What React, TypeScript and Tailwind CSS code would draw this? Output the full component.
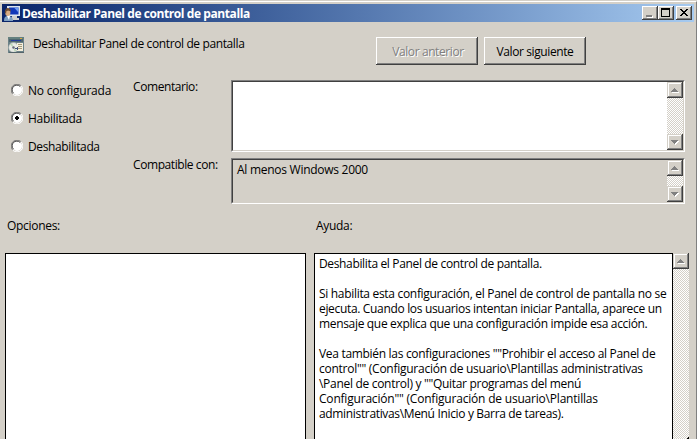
import type { ReactNode } from 'react';

const raised =
  'bg-[#d4d0c8] shadow-[inset_-1px_-1px_#404040,inset_1px_1px_#d4d0c8,inset_-2px_-2px_#808080,inset_2px_2px_#fff]';

function TitleIcon() {
  return (
    <svg width="16" height="16" viewBox="0 0 16 16" className="shrink-0">
      <path d="M3 1h13v10H3z" fill="#dde5ee" />
      <path d="M5 2.500h9.500v7H5z" fill="#1238b8" />
      <path d="M10 2.500h4.500v5z" fill="#6f9cf0" />
      <path d="M8 11h5v2h2v2H7z" fill="#d0d0cc" />
      <path d="M0 16c0-3.500 1-5 4-5s5 1.500 5 5z" fill="#7e9fc2" />
      <path d="M3 11h3l-1 4z" fill="#fff" />
      <ellipse cx="3.800" cy="7.500" rx="2.600" ry="3.600" fill="#d9ad83" />
      <path d="M.8 8c0-3 1-5 3-5s3 1.500 3 3.500L4 5.500 2.200 6.500v2z" fill="#6c4c35" />
    </svg>
  );
}

function PolicyIcon() {
  return (
    <svg width="16" height="16" viewBox="0 0 16 16" className="shrink-0" shapeRendering="crispEdges">
      <rect x="0" y="0" width="16" height="16" fill="#6c8288" />
      <rect x="0" y="0" width="16" height="2" fill="#65807f" />
      <rect x="1" y="2" width="14" height="3" fill="#4e6670" />
      <rect x="12" y="1" width="2" height="1" fill="#d8a944" />
      <rect x="3" y="3" width="10" height="1" fill="#243c9c" />
      <g shapeRendering="auto">
        <circle cx="5.500" cy="10.500" r="4.900" fill="#e7eae5" stroke="#9aa5a5" strokeWidth=".6" />
        <path d="M5.500 10.500 2 7.500l2-1.500zM5.500 10.500l3 3-2 1z" fill="#b9d7b4" />
        <circle cx="5.500" cy="10.500" r="1.200" fill="#667" />
      </g>
      <rect x="9" y="6" width="6" height="8" fill="#f4eedc" />
      <path d="M10 7h4v1h-4zM10 9h4v1h-4zM10 11h4v1h-4z" fill="#a39a7c" />
      <path d="M7 11h3v1H7zM9 10h1v3H9z" fill="#44547c" />
      <path d="M1 15h15v1H1z" fill="#53646a" />
    </svg>
  );
}

const raisedThin =
  'bg-[#d4d0c8] shadow-[inset_-1px_-1px_#404040,inset_1px_1px_#fff,inset_-2px_-2px_#808080]';

function CaptionButton({ children }: { children: ReactNode }) {
  return (
    <button className={`h-[14px] w-4 shrink-0 ${raisedThin}`}>
      <svg width="16" height="14" viewBox="0 0 16 14" shapeRendering="crispEdges">{children}</svg>
    </button>
  );
}

function Arrow({ down = false }: { down?: boolean }) {
  return (
    <div className={`h-4 w-4 shrink-0 ${raised}`}>
      <svg width="16" height="16" viewBox="0 0 16 16" shapeRendering="crispEdges">
        {down ? (
          <>
            <path d="M5 7h7v1h-1v1h-1v1H9v1H8v-1H7V9H6V8H5z" fill="#fff" />
            <path d="M4 6h7v1h-1v1H9v1H8v1H7V9H6V8H5V7H4z" fill="#808080" />
          </>
        ) : (
          <>
            <path d="M5 10h7v1H5z" fill="#fff" />
            <path d="M7 6h1v1h1v1h1v1h1v1H4V9h1V8h1V7h1z" fill="#808080" />
          </>
        )}
      </svg>
    </div>
  );
}

function ScrollBar({ open = false }: { open?: boolean }) {
  return (
    <div className="flex w-4 shrink-0 flex-col bg-[repeating-conic-gradient(#fff_0_25%,#d4d0c8_0_50%)] bg-[length:2px_2px]">
      <Arrow />
      <div className="flex-1" />
      {open ? (
        <svg width="16" height="2" viewBox="0 0 16 2" shapeRendering="crispEdges">
          <path d="M15 0h1v2h-2V1h1z" fill="#000" />
        </svg>
      ) : (
        <Arrow down />
      )}
    </div>
  );
}

function Radio({ label, checked = false, spacing }: { label: string; checked?: boolean; spacing: string }) {
  return (
    <label className="flex h-7 items-center gap-[5px]">
      <svg width="12" height="12" viewBox="0 0 12 12">
        <circle cx="6" cy="6" r="5" fill="#fff" />
        <path d="M1.800 10.200A5.500 5.500 0 0 1 10.200 1.800" fill="none" stroke="#808080" />
        <path d="M2.500 9.200A4.500 4.500 0 0 1 9.200 2.500" fill="none" stroke="#404040" />
        <path d="M1.800 10.200A5.500 5.500 0 0 0 10.200 1.800" fill="none" stroke="#fff" />
        {checked && <path d="M5 4h2v1h1v2H7v1H5V7H4V5h1z" fill="#000" shapeRendering="crispEdges" />}
      </svg>
      <span className={`pt-px ${spacing}`}>{label}</span>
    </label>
  );
}

const help = [
  { text: 'Deshabilita el Panel de control de pantalla.', spacing: 'tracking-[-0.35px]' },
  { text: '', spacing: '' },
  { text: 'Si habilita esta configuración, el Panel de control de pantalla no se', spacing: 'tracking-[-0.31px]' },
  { text: 'ejecuta. Cuando los usuarios intentan iniciar Pantalla, aparece un', spacing: 'tracking-[-0.33px]' },
  { text: 'mensaje que explica que una configuración impide esa acción.', spacing: 'tracking-[-0.33px]' },
  { text: '', spacing: '' },
  { text: 'Vea también las configuraciones ""Prohibir el acceso al Panel de', spacing: 'tracking-[-0.31px]' },
  { text: 'control"" (Configuración de usuario\\Plantillas administrativas', spacing: 'tracking-[-0.26px]' },
  { text: '\\Panel de control) y ""Quitar programas del menú', spacing: 'tracking-[-0.3px]' },
  { text: 'Configuración"" (Configuración de usuario\\Plantillas', spacing: 'tracking-[-0.2px]' },
  { text: 'administrativas\\Menú Inicio y Barra de tareas).', spacing: 'tracking-[-0.34px]' },
];

const sunken = 'border border-t-[#808080] border-l-[#808080] border-r-white border-b-white';
const sunkenInner = 'flex h-full border border-t-[#404040] border-l-[#404040] border-r-[#d4d0c8] border-b-[#d4d0c8]';

export default function App() {
  return (
    <div className="h-[439px] w-[697px] overflow-hidden bg-[#d4d0c8] pt-px font-['Open_Sans','Noto_Sans',sans-serif] text-[12px] leading-[15px] text-black">
      <div className="flex h-[438px] flex-col border-t border-r border-t-white border-r-[#808080]">
        <header className="mt-[2px] ml-[2px] flex h-[18px] w-[692px] shrink-0 items-center bg-linear-to-r from-[#0a246a] to-[#a6caf0] pr-[2px] pl-[2px]">
          <TitleIcon />
          <span className="ml-[2px] flex-1 whitespace-nowrap font-bold tracking-[-0.42px] text-white">
            Deshabilitar Panel de control de pantalla
          </span>
          <CaptionButton>
            <path d="M5 10h6v2H5z" fill="#fff" />
            <path d="M4 9h6v2H4z" fill="#808080" />
          </CaptionButton>
          <CaptionButton>
            <path d="M3 2h9v9H3zM4 4v6h7V4z" fill="#000" fillRule="evenodd" />
          </CaptionButton>
          <div className="w-[2px]" />
          <CaptionButton>
            <path d="M4 3h2v1h1v1h2V4h1V3h2v1h-1v1h-1v1H9v1h1v1h1v1h1v1h-2V9H9V8H7v1H6v1H4V9h1V8h1V7h1V6H6V5H5V4H4z" fill="#000" />
          </CaptionButton>
        </header>

        <div className="flex h-[57px] shrink-0 pt-[15px] pl-2">
          <PolicyIcon />
          <span className="-mt-px ml-[9px] w-[343px] whitespace-nowrap tracking-[-0.38px]">
            Deshabilitar Panel de control de pantalla
          </span>
          <button className={`flex h-7 w-[102px] items-center justify-center pl-[2px] whitespace-nowrap tracking-[-0.4px] text-[#808080] [text-shadow:1px_1px_#fff] ${raisedThin}`}>
            Valor anterior
          </button>
          <button className={`ml-[6px] flex h-7 w-[102px] items-center justify-center whitespace-nowrap tracking-[-0.4px] ${raisedThin}`}>
            Valor siguiente
          </button>
        </div>

        <div className="flex h-[138px] shrink-0">
          <div className="w-[133px] shrink-0 pl-[11px]">
            <div className="-mt-[3px]">
              <Radio label="No configurada" spacing="tracking-[-0.22px]" />
              <Radio label="Habilitada" checked spacing="tracking-[-0.3px]" />
              <Radio label="Deshabilitada" spacing="tracking-[-0.38px]" />
            </div>
          </div>
          <div className="w-[98px] shrink-0 whitespace-nowrap tracking-[-0.42px]">
            <div className="h-[78px]">Comentario:</div>
            <div>Compatible con:</div>
          </div>
          <div className="w-[454px] pt-px">
            <div className={`h-[72px] ${sunken}`}>
              <div className={sunkenInner}>
                <div className="flex-1 bg-white" />
                <ScrollBar />
              </div>
            </div>
            <div className={`mt-[6px] h-[46px] ${sunken}`}>
              <div className={sunkenInner}>
                <div className="flex-1 pt-[2px] pl-1 tracking-[-0.27px]">Al menos Windows 2000</div>
                <ScrollBar />
              </div>
            </div>
          </div>
        </div>

        <div className="flex h-[36px] shrink-0 pt-px pl-[7px] tracking-[-0.3px]">
          <span className="w-[309px]">Opciones:</span>
          <span>Ayuda:</span>
        </div>

        <div className="flex min-h-0 flex-1 pl-[5px]">
          <div className="w-[301px] border border-b-0 border-black bg-white" />
          <div className="ml-2 w-[359px] border border-b-0 border-black bg-white pt-[2px] pl-1">
            {help.map((line, i) => (
              <div key={i} className={`h-[15px] whitespace-nowrap ${line.spacing}`}>
                {line.text}
              </div>
            ))}
          </div>
          <ScrollBar open />
        </div>
      </div>
    </div>
  );
}
